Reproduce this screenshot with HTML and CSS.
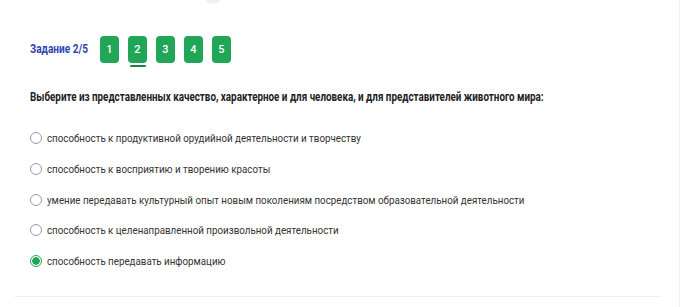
FILE: index.html
```html
<!DOCTYPE html>
<html lang="ru">
<head>
    <meta charset="UTF-8">
    <meta name="viewport" content="width=device-width, initial-scale=1.0">
    <title>Задание 2/5</title>
    <link rel="stylesheet" href="styles.css">
</head>
<body>
    <div class="page">
        <div class="top-dot"></div>

        <div class="task-nav">
            <span class="task-label"><span class="narrow">Задание 2/5</span></span>
            <div class="task-steps">
                <a href="javascript:;" class="step">1</a>
                <a href="javascript:;" class="step active">2</a>
                <a href="javascript:;" class="step">3</a>
                <a href="javascript:;" class="step">4</a>
                <a href="javascript:;" class="step">5</a>
            </div>
        </div>

        <p class="question"><span class="narrow">Выберите из представленных качество, характерное и для человека, и для представителей животного мира:</span></p>

        <ul class="answers">
            <li class="answer"><span class="radio"></span><span class="narrow">способность к продуктивной орудийной деятельности и творчеству</span></li>
            <li class="answer"><span class="radio"></span><span class="narrow">способность к восприятию и творению красоты</span></li>
            <li class="answer"><span class="radio"></span><span class="narrow">умение передавать культурный опыт новым поколениям посредством образовательной деятельности</span></li>
            <li class="answer"><span class="radio"></span><span class="narrow">способность к целенаправленной произвольной деятельности</span></li>
            <li class="answer checked"><span class="radio"></span><span class="narrow">способность передавать информацию</span></li>
        </ul>

        <div class="bottom-line"></div>
    </div>
</body>
</html>
```

FILE: styles.css
```css
*{
    margin: 0;
    padding: 0;
    box-sizing: border-box;
}
body{
    background: #ffffff;
    font-family: Roboto, "Liberation Sans", sans-serif;
    color: #2b2b2b;
}

.page{
    position: relative;
    width: 680px;
    height: 307px;
    padding: 36px 0 0 30px;
    border-right: 1px solid #eeeeee;
}

/* текст в скриншоте узкий */
.narrow{
    display: inline-block;
    white-space: nowrap;
    transform-origin: left center;
}

/* светлое пятно сверху */
.top-dot{
    position: absolute;
    left: 205px;
    top: -10px;
    width: 16px;
    height: 14px;
    border-radius: 50%;
    background: #eef0fa;
}

.task-nav{
    display: flex;
    align-items: flex-start;
    height: 31px;
}

.task-label{
    font-size: 12px;
    font-weight: 700;
    color: #3146b0;
    line-height: 27px;
    width: 70px;
}
.task-label .narrow{
    transform: scaleX(0.84);
}

.task-steps{
    display: flex;
    gap: 9px;
}

a{
    text-decoration: none;
}

.step{
    position: relative;
    display: block;
    width: 19px;
    height: 27px;
    line-height: 27px;
    border-radius: 4px;
    background: #21a556;
    color: #ffffff;
    font-size: 11px;
    font-weight: 500;
    text-align: center;
}

.step.active::after{
    content: "";
    position: absolute;
    left: 2px;
    bottom: -4px;
    width: 16px;
    height: 2px;
    border-radius: 1px;
    background: #1e8048;
}

.question{
    margin-top: 22px;
    font-size: 12px;
    font-weight: 700;
    color: #222222;
    line-height: 16px;
}
.question .narrow{
    transform: scaleX(0.82);
}

.answers{
    list-style: none;
    margin-top: 18px;
}

.answer{
    display: flex;
    align-items: center;
    height: 30.7px;
    font-size: 11.5px;
    color: #333333;
}
.answer .narrow{
    transform: scaleX(0.85);
}

.radio{
    width: 12px;
    height: 12px;
    margin-right: 5px;
    border: 1px solid #9a9a9a;
    border-radius: 50%;
    flex: none;
}

.answer.checked .radio{
    border: 1.5px solid #21a556;
    background: radial-gradient(circle, #21a556 0 3.5px, #ffffff 4px);
}

.bottom-line{
    position: absolute;
    left: 15px;
    right: 18px;
    bottom: 10px;
    height: 1px;
    background: #f0f0f0;
}
```
